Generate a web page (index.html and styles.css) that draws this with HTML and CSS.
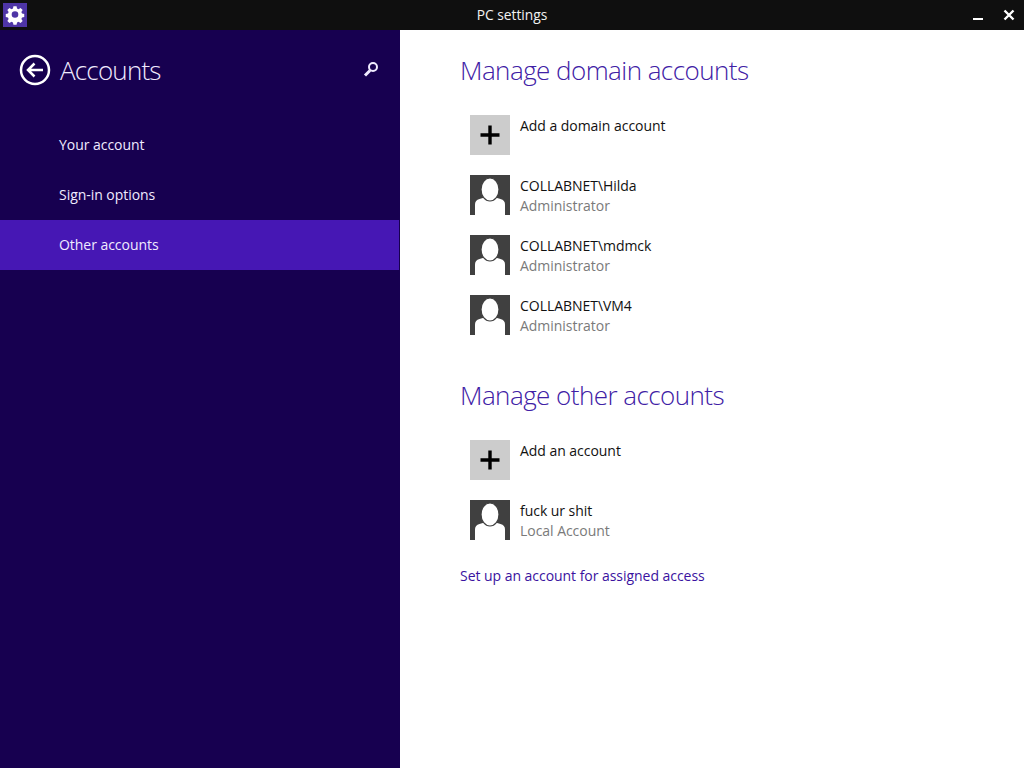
FILE: index.html
```html
<!DOCTYPE html>
<html lang="en">
<head>
<meta charset="utf-8">
<title>PC settings</title>
<link rel="stylesheet" href="styles.css">
</head>
<body>
<header class="titlebar">
  <div class="app-icon">
    <svg width="24" height="24" viewBox="-1 -0.500 26 26"><path class="gear" fill-rule="evenodd" d="M10.300 3h3.400l.5 2.500 1.600.7 2.200-1.400 2.300 2.300-1.400 2.200.7 1.600 2.400.5v3.300l-2.400.5-.7 1.600 1.400 2.200-2.300 2.300-2.200-1.400-1.600.7-.5 2.400h-3.400l-.5-2.400-1.600-.7-2.200 1.400-2.300-2.300 1.400-2.200-.7-1.600-2.400-.5v-3.300l2.400-.5.7-1.600-1.400-2.200 2.300-2.300 2.200 1.400 1.600-.7zM12 8.400a3.600 3.600 0 1 0 0 7.200 3.600 3.600 0 0 0 0-7.200z"/></svg>
  </div>
  <div class="title">PC settings</div>
  <div class="window-buttons">
    <svg width="12" height="12" viewBox="0 0 12 12"><rect class="glyph" x="1" y="9" width="10" height="2"/></svg>
    <svg width="14" height="14" viewBox="0 0 14 14"><path class="glyph-line" d="M2.500 2.500l9 9M11.500 2.500l-9 9"/></svg>
  </div>
</header>
<div class="main">
  <nav class="sidebar">
    <div class="side-head">
      <svg class="back" width="32" height="32" viewBox="0 0 32 32"><circle class="back-ring" cx="16" cy="16" r="14"/><path class="back-arrow" d="M24 16H10M15.500 9.500L9 16l6.500 6.500"/></svg>
      <h1 class="side-title">Accounts</h1>
      <svg class="search" width="18" height="18" viewBox="0 0 18 18"><circle class="search-ring" cx="11" cy="6" r="4"/><path class="search-handle" d="M8 9.500L3 14.500"/></svg>
    </div>
    <ul class="side-list">
      <li class="side-item">Your account</li>
      <li class="side-item">Sign-in options</li>
      <li class="side-item active">Other accounts</li>
    </ul>
  </nav>
  <main class="content">
    <h2 class="section-title">Manage domain accounts</h2>
    <div class="rows">
      <div class="row">
        <div class="tile add"><svg width="40" height="40" viewBox="0 0 40 40"><path class="plus" d="M20 10.500v19M10.500 20h19"/></svg></div>
        <div class="row-text"><div class="name">Add a domain account</div></div>
      </div>
      <div class="row">
        <div class="tile user"><svg width="40" height="40" viewBox="0 0 40 40"><path class="person" d="M5 40V29.500c0-3 1.500-4.500 4.500-5.500l5-1.500h11l5 1.500c3 1 4.500 2.500 4.500 5.500V40z"/><ellipse class="head" cx="20" cy="14.500" rx="9" ry="11.500"/></svg></div>
        <div class="row-text"><div class="name">COLLABNET\Hilda</div><div class="sub">Administrator</div></div>
      </div>
      <div class="row">
        <div class="tile user"><svg width="40" height="40" viewBox="0 0 40 40"><path class="person" d="M5 40V29.500c0-3 1.500-4.500 4.500-5.500l5-1.500h11l5 1.500c3 1 4.500 2.500 4.500 5.500V40z"/><ellipse class="head" cx="20" cy="14.500" rx="9" ry="11.500"/></svg></div>
        <div class="row-text"><div class="name">COLLABNET\mdmck</div><div class="sub">Administrator</div></div>
      </div>
      <div class="row">
        <div class="tile user"><svg width="40" height="40" viewBox="0 0 40 40"><path class="person" d="M5 40V29.500c0-3 1.500-4.500 4.500-5.500l5-1.500h11l5 1.500c3 1 4.500 2.500 4.500 5.500V40z"/><ellipse class="head" cx="20" cy="14.500" rx="9" ry="11.500"/></svg></div>
        <div class="row-text"><div class="name">COLLABNET\VM4</div><div class="sub">Administrator</div></div>
      </div>
    </div>
    <h2 class="section-title second">Manage other accounts</h2>
    <div class="rows">
      <div class="row">
        <div class="tile add"><svg width="40" height="40" viewBox="0 0 40 40"><path class="plus" d="M20 10.500v19M10.500 20h19"/></svg></div>
        <div class="row-text"><div class="name">Add an account</div></div>
      </div>
      <div class="row">
        <div class="tile user"><svg width="40" height="40" viewBox="0 0 40 40"><path class="person" d="M5 40V29.500c0-3 1.500-4.500 4.500-5.500l5-1.500h11l5 1.500c3 1 4.500 2.500 4.500 5.500V40z"/><ellipse class="head" cx="20" cy="14.500" rx="9" ry="11.500"/></svg></div>
        <div class="row-text"><div class="name">fuck ur shit</div><div class="sub">Local Account</div></div>
      </div>
    </div>
    <a class="link">Set up an account for assigned access</a>
  </main>
</div>
</body>
</html>
```
FILE: styles.css
```css
* { box-sizing: border-box; }
html, body { margin: 0; height: 100%; }
body {
  width: 1024px;
  height: 768px;
  overflow: hidden;
  display: flex;
  flex-direction: column;
  font-family: "Open Sans", "Noto Sans", sans-serif;
  background: #fff;
}
.titlebar {
  height: 30px;
  flex: none;
  background: #0f0f0f;
  display: flex;
  align-items: center;
  position: relative;
  padding: 0 8px 0 3px;
  justify-content: space-between;
}
.app-icon {
  width: 24px;
  height: 24px;
  background: #4e35a5;
  display: flex;
}
.gear { fill: #fff; }
.title {
  position: absolute;
  left: 0;
  right: 0;
  text-align: center;
  color: #f2f2f2;
  font-size: 13.800px;
  line-height: 30px;
  pointer-events: none;
}
.window-buttons {
  display: flex;
  align-items: center;
  gap: 18px;
}
.glyph { fill: #fff; }
.glyph-line { stroke: #fff; stroke-width: 2.400; fill: none; }
.main { flex: 1; display: flex; min-height: 0; }
.sidebar {
  width: 400px;
  flex: none;
  background: #170050;
  padding-top: 20px;
  border-right: 1px solid #170050;
}
.side-head {
  display: flex;
  align-items: center;
  height: 40px;
  padding-left: 19px;
  padding-right: 19px;
  color: #fff;
}
.back { flex: none; }
.back-ring, .back-arrow { fill: none; stroke: #fff; stroke-width: 2.500; }
.side-title {
  margin: 0 0 0 9px;
  flex: 1;
  font-size: 26px;
  font-weight: 300;
  line-height: 40px;
  letter-spacing: -0.800px;
  color: #f0ebff;
}
.search { flex: none; }
.search-ring { fill: none; stroke: #f0ebff; stroke-width: 2; }
.search-handle { stroke: #f0ebff; stroke-width: 3; fill: none; }
.side-list { list-style: none; margin: 30px 0 0; padding: 0; }
.side-item {
  height: 50px;
  line-height: 50px;
  padding-left: 59px;
  color: #f0ebff;
  font-size: 14px;
  letter-spacing: -0.040px;
}
.active { background: #4617b4; }
.content { flex: 1; padding: 20px 0 0 60px; }
.section-title {
  margin: 0;
  font-size: 26px;
  font-weight: 300;
  line-height: 40px;
  letter-spacing: -0.550px;
  color: #4020a5;
}
.section-title.second { margin-top: 40px; }
.rows {
  margin-top: 25px;
  padding-left: 10px;
  display: flex;
  flex-direction: column;
  gap: 20px;
}
.row { display: flex; height: 40px; }
.tile { width: 40px; height: 40px; flex: none; display: flex; }
.add { background: #cccccc; }
.user { background: #404040; }
.plus { stroke: #000; stroke-width: 3.400; fill: none; }
.person { fill: #fff; }
.head { fill: #fff; stroke: #404040; stroke-width: 1.200; }
.row-text { margin-left: 10px; padding-top: 1px; }
.name { font-size: 14px; line-height: 20px; color: #111; letter-spacing: -0.040px; }
.sub { font-size: 14px; line-height: 20px; color: #7a7a7a; letter-spacing: -0.040px; }
.link {
  display: block;
  margin-top: 26px;
  font-size: 14px;
  line-height: 20px;
  color: #3a12a0;
  letter-spacing: -0.040px;
}
```
